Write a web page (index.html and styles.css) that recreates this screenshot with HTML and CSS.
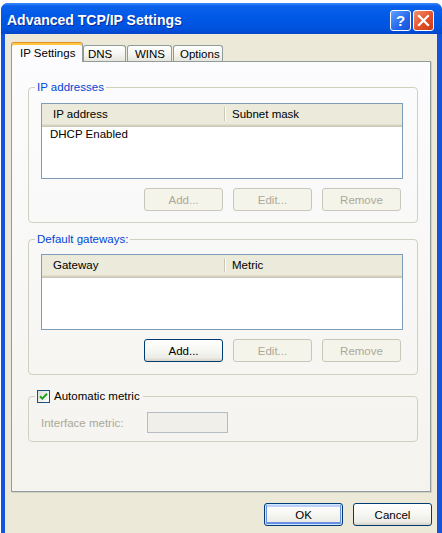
FILE: index.html
```html
<!DOCTYPE html>
<html lang="en">
<head>
    <meta charset="UTF-8">
    <meta name="viewport" content="width=device-width, initial-scale=1.0">
    <title>Advanced TCP/IP Settings</title>
    <link rel="stylesheet" href="styles.css">
</head>
<body>
    <div class="window">
        <div class="title-bar">
            <span class="title-text">Advanced TCP/IP Settings</span>
            <div class="title-buttons">
                <span class="title-btn help-btn">?</span>
                <span class="title-btn close-btn">
                    <svg width="21" height="21" viewBox="0 0 21 21">
                        <path d="M6 6 L15 15 M15 6 L6 15" stroke="#fff" stroke-width="2.2" stroke-linecap="square"/>
                    </svg>
                </span>
            </div>
        </div>

        <div class="window-body">
            <div class="tabs">
                <div class="tab tab-active">IP Settings</div>
                <div class="tab tab-dns">DNS</div>
                <div class="tab tab-wins">WINS</div>
                <div class="tab tab-options">Options</div>
            </div>

            <div class="tab-panel">
                <fieldset class="group group-ip">
                    <legend class="group-title">IP addresses</legend>
                    <div class="list-view">
                        <div class="list-header">
                            <span class="col col-first">IP address</span>
                            <span class="col-divider"></span>
                            <span class="col">Subnet mask</span>
                        </div>
                        <div class="list-row">DHCP Enabled</div>
                    </div>
                    <div class="button-row">
                        <button class="btn" disabled>Add...</button>
                        <button class="btn" disabled>Edit...</button>
                        <button class="btn" disabled>Remove</button>
                    </div>
                </fieldset>

                <fieldset class="group group-gateway">
                    <legend class="group-title">Default gateways:</legend>
                    <div class="list-view">
                        <div class="list-header">
                            <span class="col col-first">Gateway</span>
                            <span class="col-divider"></span>
                            <span class="col">Metric</span>
                        </div>
                    </div>
                    <div class="button-row">
                        <button class="btn">Add...</button>
                        <button class="btn" disabled>Edit...</button>
                        <button class="btn" disabled>Remove</button>
                    </div>
                </fieldset>

                <fieldset class="group group-metric">
                    <legend class="group-title check-title">
                        <span class="checkbox">
                            <svg width="11" height="11" viewBox="0 0 11 11">
                                <path d="M2 5.2 L4.3 7.6 L9 2.8" stroke="#21a121" stroke-width="2" fill="none"/>
                            </svg>
                        </span>
                        <span class="check-label">Automatic metric</span>
                    </legend>
                    <div class="metric-row">
                        <span class="metric-label">Interface metric:</span>
                        <span class="text-box"></span>
                    </div>
                </fieldset>
            </div>

            <div class="dialog-buttons">
                <button class="btn btn-default">OK</button>
                <button class="btn">Cancel</button>
            </div>
        </div>
    </div>
</body>
</html>
```

FILE: styles.css
```css
* {
    margin: 0;
    padding: 0;
    box-sizing: border-box;
}

body {
    background: #fff;
    font-family: 'Liberation Sans', Arial, sans-serif;
    font-size: 11.5px;
    color: #000;
}

.window {
    margin: 3px 0 0 1px;
    width: 441px;
    height: 530px;
    border-radius: 7px 7px 0 0;
    overflow: hidden;
    display: flex;
    flex-direction: column;
    background: #1453da;
}

/* title bar */
.title-bar {
    height: 31px;
    display: flex;
    align-items: center;
    padding: 0 8px 0 6px;
    background: linear-gradient(#3d8dff 0, #0a62ec 3px, #0058e6 45%, #0053df 80%, #0046cc 100%);
}

.title-text {
    color: #fff;
    font-weight: bold;
    font-size: 14px;
    text-shadow: 1px 1px 0 #0a2a9a;
    padding-top: 3px;
}

.title-buttons {
    margin-left: auto;
    display: flex;
    gap: 2px;
    padding-top: 3px;
}

.title-btn {
    width: 21px;
    height: 21px;
    border: 1px solid #fff;
    border-radius: 3px;
    display: flex;
    align-items: center;
    justify-content: center;
    color: #fff;
}

.help-btn {
    background: linear-gradient(135deg, #5ea2ff, #2566ec 60%, #1a50d6);
    font-weight: bold;
    font-size: 15px;
}

.close-btn {
    background: linear-gradient(135deg, #f29270, #e2502a 55%, #c93a16);
}

.close-btn svg {
    margin: -1px;
}

/* client area */
.window-body {
    flex: 1;
    margin: 0 5px 0 4px;
    background: #ece9d8;
    padding: 8px 6px 0 6px;
}

.tabs {
    display: flex;
    align-items: flex-end;
    height: 19px;
}

.tab {
    height: 16px;
    display: flex;
    align-items: center;
    border: 1px solid #919b9c;
    border-bottom: none;
    border-radius: 3px 3px 0 0;
    background: linear-gradient(#ffffff, #f3f3ef 60%, #e5e4dc);
    margin-right: 1px;
}

.tab-active {
    position: relative;
    z-index: 1;
    width: 72px;
    height: 20px;
    margin-bottom: -1px;
    margin-right: 0;
    padding: 1px 0 0 8px;
    background: #fcfcfe;
    border-top: 1px solid #e68b2c;
    box-shadow: inset 0 2px 0 #ffc83c;
}

.tab-dns { width: 43px; padding-left: 4px; }
.tab-wins { width: 45px; padding-left: 7px; }
.tab-options { width: 50px; padding-left: 6px; }

.tab-panel {
    height: 431px;
    border: 1px solid #919b9c;
    background: linear-gradient(#fcfcfe, #f4f3ee);
    box-shadow: 1px 1px 0 #d4d0c0;
    padding: 18px 12px 0 16px;
}

/* group boxes */
.group {
    border: 1px solid #d0d0bf;
    border-radius: 4px;
    padding: 9px 14px 11px 12px;
    min-width: 0;
}

.group-gateway {
    margin-top: 9px;
    padding-top: 8px;
    padding-bottom: 12px;
}

.group-metric {
    margin-top: 14px;
    padding-top: 9px;
    padding-bottom: 8px;
}

.group-title {
    color: #0046d5;
    line-height: 14px;
    padding: 0 2px;
    margin-left: -6px;
}

.check-title {
    display: flex;
    align-items: center;
    color: #000;
    padding: 0 3px 0 2px;
}

.checkbox {
    width: 13px;
    height: 13px;
    border: 1px solid #1c5180;
    background: linear-gradient(135deg, #dcdcd7, #fff);
    display: flex;
    align-items: center;
    justify-content: center;
    margin-right: 4px;
}

/* list views */
.list-view {
    height: 76px;
    border: 1px solid #7f9db9;
    background: #fff;
}

.list-header {
    height: 23px;
    display: flex;
    align-items: center;
    padding-bottom: 3px;
    background: linear-gradient(#ebeadb 0, #ebeadb 20px, #e2decd 20px, #e2decd 21px, #d6d2c2 21px, #d6d2c2 22px, #cbc7b8 22px);
}

.col {
    padding-left: 6px;
}

.col-first {
    width: 182px;
    padding-left: 11px;
}

.col-divider {
    width: 2px;
    height: 14px;
    border-left: 1px solid #cbc7b8;
    border-right: 1px solid #fff;
}

.list-row {
    line-height: 14px;
    padding-left: 8px;
}

/* buttons */
.button-row {
    display: flex;
    justify-content: flex-end;
    gap: 10px;
    margin-top: 9px;
    margin-right: 2px;
}

.btn {
    width: 79px;
    height: 23px;
    font-family: inherit;
    font-size: 11.5px;
    color: #000;
    border: 1px solid #003c74;
    border-radius: 3px;
    background: linear-gradient(#ffffff, #f6f6f2 50%, #ecebe5 85%, #d6d0c5);
}

.btn:disabled {
    color: #aca899;
    border-color: #c9c7ba;
    background: #f5f4ea;
}

.btn-default {
    box-shadow: inset 0 0 0 1px #cee7ff, inset 0 -1px 0 2px #6b8fe4, inset 0 1px 0 2px #bcd2f6;
}

/* metric row */
.metric-row {
    display: flex;
    align-items: center;
    height: 21px;
}

.metric-label {
    width: 106px;
    color: #aca899;
}

.text-box {
    width: 81px;
    height: 21px;
    border: 1px solid #b5bcc6;
    background: #f0efea;
}

.dialog-buttons {
    display: flex;
    justify-content: flex-end;
    gap: 10px;
    margin-top: 11px;
    margin-right: -1px;
}
```
